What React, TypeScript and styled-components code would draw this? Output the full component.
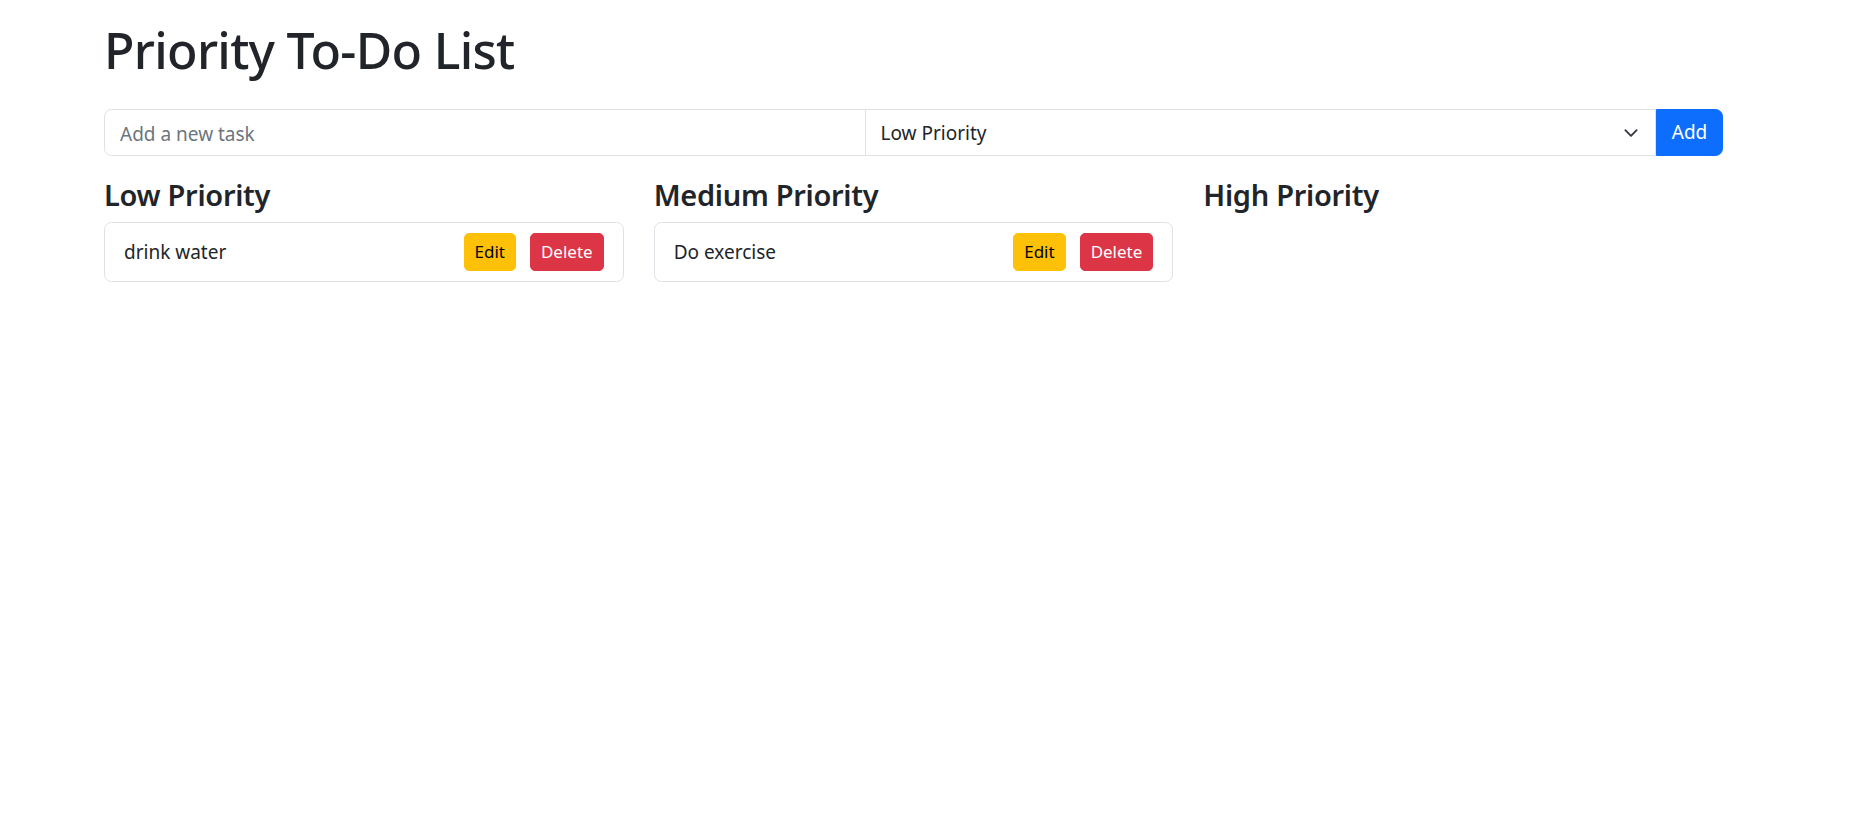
import { useState } from "react";
import styled, { createGlobalStyle } from "styled-components";

const GlobalStyle = createGlobalStyle`
  * { box-sizing: border-box; }
  body {
    margin: 0;
    background: #fff;
    color: #212529;
    font-family: "Noto Sans", "Open Sans", sans-serif;
    font-size: 20px;
    line-height: 1.5;
  }
`;

const Page = styled.div`
  padding: 20px 130px 0 104px;
`;

const Title = styled.h1`
  margin: 0 0 29px;
  font-size: 50px;
  font-weight: 500;
  line-height: 1.2;
  letter-spacing: -0.7px;
`;

const InputGroup = styled.div`
  display: flex;
  height: 47px;
  margin-bottom: 22px;
`;

const TaskInput = styled.input`
  flex: 1 1 761px;
  min-width: 0;
  height: 100%;
  padding: 2px 15px 0;
  border: 1px solid #dee2e6;
  border-radius: 7.5px 0 0 7.5px;
  font: inherit;
  font-size: 19px;
  color: #212529;
  outline: none;
  &::placeholder { color: #6c757d; }
`;

const SelectWrap = styled.div`
  position: relative;
  flex: 1 1 791px;
  min-width: 0;
  margin-left: -1px;
`;

const PrioritySelect = styled.select`
  appearance: none;
  width: 100%;
  height: 100%;
  padding: 2px 55px 0 15px;
  border: 1px solid #dee2e6;
  border-radius: 0;
  background: #fff;
  font: inherit;
  font-size: 19px;
  color: #212529;
  outline: none;
`;

const Chevron = styled.svg`
  position: absolute;
  right: 15px;
  top: 50%;
  width: 20px;
  height: 15px;
  transform: translateY(-50%);
  pointer-events: none;
`;

const AddButton = styled.button`
  flex: 0 0 67px;
  height: 100%;
  border: 1px solid #0d6efd;
  border-radius: 0 7.5px 7.5px 0;
  background: #0d6efd;
  color: #fff;
  font: inherit;
  font-size: 19px;
  cursor: pointer;
`;

const Columns = styled.div`
  display: grid;
  grid-template-columns: repeat(3, 1fr);
  column-gap: 30px;
`;

const ColumnHeading = styled.h4`
  margin: 0 0 9px;
  font-size: 29px;
  font-weight: 600;
  line-height: 1.2;
  letter-spacing: -0.3px;
`;

const TaskCard = styled.div`
  display: flex;
  align-items: center;
  gap: 14px;
  padding: 10px 19px;
  border: 1px solid #dee2e6;
  border-radius: 7.5px;
  margin-bottom: 10px;
`;

const TaskText = styled.span`
  flex: 1;
  font-size: 19px;
`;

const SmallButton = styled.button<{ $variant: "warning" | "danger" }>`
  height: 38px;
  padding: 0 10px;
  border: 1px solid ${(p) => (p.$variant === "warning" ? "#ffc107" : "#dc3545")};
  border-radius: 5px;
  background: ${(p) => (p.$variant === "warning" ? "#ffc107" : "#dc3545")};
  color: ${(p) => (p.$variant === "warning" ? "#000" : "#fff")};
  font: inherit;
  font-size: 17px;
  cursor: pointer;
`;

type Priority = "Low" | "Medium" | "High";

interface Task {
  id: number;
  text: string;
  priority: Priority;
}

const priorities: Priority[] = ["Low", "Medium", "High"];

export default function App() {
  const [tasks, setTasks] = useState<Task[]>([
    { id: 1, text: "drink water", priority: "Low" },
    { id: 2, text: "Do exercise", priority: "Medium" },
  ]);
  const [text, setText] = useState("");
  const [priority, setPriority] = useState<Priority>("Low");

  const addTask = () => {
    if (!text.trim()) return;
    setTasks([...tasks, { id: Date.now(), text: text.trim(), priority }]);
    setText("");
  };

  const editTask = (id: number) => {
    const next = window.prompt("Edit task");
    if (next) setTasks(tasks.map((t) => (t.id === id ? { ...t, text: next } : t)));
  };

  const deleteTask = (id: number) => setTasks(tasks.filter((t) => t.id !== id));

  return (
    <>
      <GlobalStyle />
      <Page>
        <Title>Priority To-Do List</Title>
        <InputGroup>
          <TaskInput placeholder="Add a new task" value={text} onChange={(e) => setText(e.target.value)} />
          <SelectWrap>
            <PrioritySelect value={priority} onChange={(e) => setPriority(e.target.value as Priority)}>
              {priorities.map((p) => (
                <option key={p} value={p}>
                  {p} Priority
                </option>
              ))}
            </PrioritySelect>
            <Chevron viewBox="0 0 16 16">
              <path fill="none" stroke="#343a40" strokeLinecap="round" strokeLinejoin="round" strokeWidth="2" d="m2 5 6 6 6-6" />
            </Chevron>
          </SelectWrap>
          <AddButton onClick={addTask}>Add</AddButton>
        </InputGroup>
        <Columns>
          {priorities.map((p) => (
            <div key={p}>
              <ColumnHeading>{p} Priority</ColumnHeading>
              {tasks
                .filter((t) => t.priority === p)
                .map((t) => (
                  <TaskCard key={t.id}>
                    <TaskText>{t.text}</TaskText>
                    <SmallButton $variant="warning" onClick={() => editTask(t.id)}>
                      Edit
                    </SmallButton>
                    <SmallButton $variant="danger" onClick={() => deleteTask(t.id)}>
                      Delete
                    </SmallButton>
                  </TaskCard>
                ))}
            </div>
          ))}
        </Columns>
      </Page>
    </>
  );
}
